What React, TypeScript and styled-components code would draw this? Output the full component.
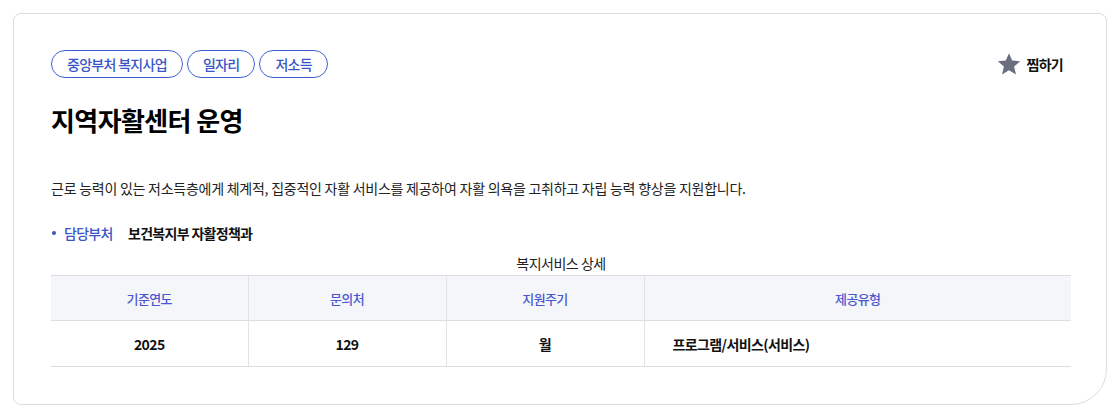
import styled, { createGlobalStyle } from 'styled-components';

const GlobalStyle = createGlobalStyle`
  body {
    margin: 0;
    background: #ffffff;
    font-family: 'Noto Sans CJK KR', 'Noto Sans', sans-serif;
    color: #111111;
  }
`;

const tags = ['중앙부처 복지사업', '일자리', '저소득'];

const columns = [
  { label: '기준연도', value: '2025', width: 197 },
  { label: '문의처', value: '129', width: 198 },
  { label: '지원주기', value: '월', width: 198 },
  { label: '제공유형', value: '프로그램/서비스(서비스)', width: 427, left: true },
];

const App = () => {
  return (
    <>
      <GlobalStyle />
      <Page>
        <Card>
          <TopRow>
            <Tags>
              {tags.map(tag => (
                <Tag key={tag}>{tag}</Tag>
              ))}
            </Tags>
            <Bookmark type='button'>
              <svg width='24' height='24' viewBox='0 0 24 24'>
                <path
                  d='M12 1.2l3.2 7.4 8 .7-6.1 5.3 1.9 7.9L12 18.3l-7 4.2 1.9-7.9L.8 9.3l8-.7z'
                  fill='#6b6e80'
                />
              </svg>
              찜하기
            </Bookmark>
          </TopRow>

          <Title>지역자활센터 운영</Title>

          <Description>
            근로 능력이 있는 저소득층에게 체계적, 집중적인 자활 서비스를 제공하여 자활 의욕을 고취하고 자립 능력 향상을 지원합니다.
          </Description>

          <Dept>
            <DeptLabel>담당부처</DeptLabel>
            <DeptValue>보건복지부 자활정책과</DeptValue>
          </Dept>

          <Table>
            <Caption>복지서비스 상세</Caption>
            <colgroup>
              {columns.map(col => (
                <col key={col.label} style={{ width: col.width }} />
              ))}
            </colgroup>
            <thead>
              <tr>
                {columns.map(col => (
                  <Th key={col.label}>{col.label}</Th>
                ))}
              </tr>
            </thead>
            <tbody>
              <tr>
                {columns.map(col => (
                  <Td key={col.label} $left={col.left}>
                    {col.value}
                  </Td>
                ))}
              </tr>
            </tbody>
          </Table>
        </Card>
      </Page>
    </>
  );
};

const Page = styled.div`
  padding: 13px 13px 12px 13px;
`;

const Card = styled.div`
  border: 1px solid #dcdcdc;
  border-radius: 8px 8px 36px 8px;
  padding: 36px 35px 37px 37px;
  display: flex;
  flex-direction: column;
`;

const TopRow = styled.div`
  display: flex;
  justify-content: space-between;
  align-items: center;
`;

const Tags = styled.div`
  display: flex;
  gap: 4px;
`;

const Tag = styled.span`
  height: 28px;
  box-sizing: border-box;
  border: 1px solid #3d5fd6;
  border-radius: 14px;
  padding: 0 15px;
  display: flex;
  align-items: center;
  font-size: 14px;
  font-weight: 500;
  letter-spacing: -0.7px;
  color: #3a55c8;
`;

const Bookmark = styled.button`
  border: none;
  background: none;
  padding: 0 8px 0 0;
  display: flex;
  align-items: center;
  gap: 5px;
  font-family: inherit;
  font-size: 14px;
  font-weight: 700;
  letter-spacing: -0.7px;
  color: #111111;
`;

const Title = styled.h1`
  margin: 24px 0 0 0;
  font-size: 26px;
  line-height: 36px;
  font-weight: 700;
  letter-spacing: -0.6px;
  color: #000000;
`;

const Description = styled.p`
  margin: 40px 0 0 0;
  font-size: 14px;
  line-height: 20px;
  letter-spacing: -0.25px;
  color: #222222;
`;

const Dept = styled.div`
  margin-top: 25px;
  display: flex;
  align-items: center;
  font-size: 14px;
  line-height: 20px;
  letter-spacing: -0.7px;
`;

const DeptLabel = styled.span`
  position: relative;
  padding-left: 13px;
  width: 64px;
  font-weight: 500;
  color: #3a55c8;

  &::before {
    content: '';
    position: absolute;
    left: 1px;
    top: 8px;
    width: 4px;
    height: 4px;
    border-radius: 50%;
    background: #3a55c8;
  }
`;

const DeptValue = styled.span`
  font-weight: 700;
  color: #111111;
`;

const Table = styled.table`
  margin-top: 10px;
  width: 1020px;
  border-collapse: collapse;
  table-layout: fixed;
`;

const Caption = styled.caption`
  font-size: 14px;
  line-height: 20px;
  padding-bottom: 2px;
  letter-spacing: -0.5px;
  color: #222222;
`;

const Th = styled.th`
  height: 44px;
  padding: 0;
  background: #f5f6fa;
  border-top: 1px solid #dedede;
  border-bottom: 1px solid #dedede;
  border-left: 1px solid #e2e2e2;
  font-size: 13px;
  font-weight: 500;
  letter-spacing: -0.6px;
  color: #4a58d0;

  &:first-child {
    border-left: none;
  }
`;

const Td = styled.td<{ $left?: boolean }>`
  height: 45px;
  padding: 0 ${p => (p.$left ? '28px' : '0')};
  text-align: ${p => (p.$left ? 'left' : 'center')};
  border-bottom: 1px solid #dedede;
  border-left: 1px solid #e2e2e2;
  font-size: 14px;
  font-weight: 700;
  letter-spacing: -0.6px;
  color: #111111;

  &:first-child {
    border-left: none;
  }
`;

export default App;
